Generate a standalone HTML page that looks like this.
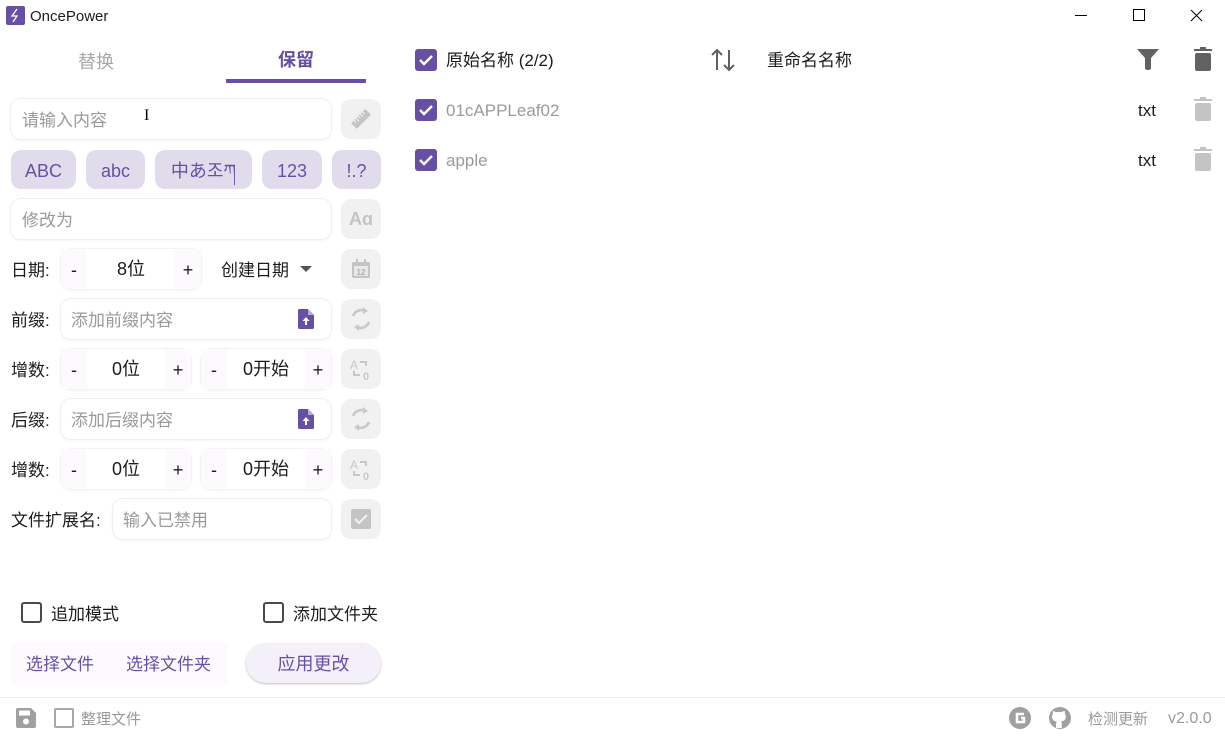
<!DOCTYPE html>
<html><head><meta charset="utf-8"><style>
*{box-sizing:border-box;margin:0;padding:0}
body{width:1225px;height:736px;background:#fff;font-family:"Liberation Sans","Noto Sans CJK SC",sans-serif;position:relative;overflow:hidden;color:#1c1b1f}
.a{position:absolute;line-height:1.15}
.inp{position:absolute;background:#fff;border-radius:10px;box-shadow:0 0 0 1px #f0eef2,0 1px 3px rgba(0,0,0,.08);font-size:17px;color:#9a9a9a;display:flex;align-items:center;padding-left:11px;padding-top:3px;line-height:1}
.btn{position:absolute;width:40px;height:40px;border-radius:10px;background:#f1f1f1;display:flex;align-items:center;justify-content:center}
.chip{position:absolute;top:150px;height:39px;border-radius:10px;background:#e1dcec;color:#6750a4;font-size:18px;display:flex;align-items:center;justify-content:center;line-height:1;padding-top:2px}
.lab{position:absolute;font-size:17px;color:#1c1b1f;height:40px;line-height:43px}
.step{position:absolute;height:40px;border-radius:10px;background:#fff;box-shadow:0 0 0 1px #f4f2f5,0 1px 3px rgba(0,0,0,.07);font-size:18px;display:flex;align-items:center}
.step span{display:block;text-align:center;line-height:42px}
.step .pm{width:26px;background:#fcfafc;height:100%}
.cb{position:absolute;width:22px;height:22px;border-radius:3px;background:#6750a4}
.row{position:absolute;font-size:17px;height:22px;line-height:24px}
</style></head><body>
<svg class="a" style="left:6px;top:6px" width="19" height="19"><rect x="0" y="0" width="19" height="19" rx="2" fill="#6750a4"/><path d="M11 3 L6 10 H11 L7 16" stroke="#fff" stroke-width="1.3" fill="none"/></svg>
<div class="a" style="left:30px;top:7px;font-size:15px;line-height:20px">OncePower</div>
<svg class="a" style="left:1075px;top:8px" width="140" height="16"><line x1="0" y1="7.5" x2="12" y2="7.5" stroke="#000"/><rect x="58.5" y="1.5" width="11" height="11" fill="none" stroke="#000"/><path d="M116 2 L127 13 M127 2 L116 13" stroke="#000"/></svg>
<div class="a" style="left:78px;top:50px;font-size:18px;color:#a8a8a8;line-height:24px">替换</div>
<div class="a" style="left:278px;top:48px;font-size:18px;color:#6750a4;font-weight:bold;line-height:24px">保留</div>
<div class="a" style="left:226px;top:79px;width:140px;height:4px;background:#6750a4"></div>
<div class="inp" style="left:11px;top:99px;width:320px;height:40px">请输入内容</div>
<div class="a" style="left:144px;top:107px;font-size:16px;color:#000;font-family:'Liberation Serif',serif">I</div>
<div class="btn" style="left:341px;top:99px"><svg width="22" height="22" viewBox="0 0 22 22"><g transform="rotate(-45 11 11)"><rect x="1" y="7" width="20" height="8" rx="1" fill="#c4c4c4"/><path d="M5 7v3M8 7v4M11 7v3M14 7v4M17 7v3" stroke="#f1f1f1" stroke-width="1.2"/></g></svg></div>
<div class="chip" style="left:11px;width:65px">ABC</div>
<div class="chip" style="left:86px;width:59px">abc</div>
<div class="chip" style="left:155px;width:97px">中あ조ཀ</div>
<div class="chip" style="left:262px;width:60px">123</div>
<div class="chip" style="left:332px;width:49px">!.?</div>
<div class="inp" style="left:11px;top:199px;width:320px;height:40px">修改为</div>
<div class="btn" style="left:341px;top:199px;color:#c4c4c4;font-size:18px;font-weight:bold">Aɑ</div>
<div class="lab" style="left:11px;top:249px">日期:</div>
<div class="step" style="left:61px;top:249px;width:140px"><span class="pm">-</span><span style="width:88px">8位</span><span class="pm">+</span></div>
<div class="lab" style="left:221px;top:249px">创建日期</div>
<svg class="a" style="left:300px;top:266px" width="12" height="7"><path d="M0 0h12L6 6z" fill="#555"/></svg>
<div class="btn" style="left:341px;top:249px"><svg width="20" height="20"><rect x="1" y="3" width="18" height="16" rx="1.5" fill="#c4c4c4"/><rect x="5" y="0" width="2" height="5" fill="#c4c4c4"/><rect x="13" y="0" width="2" height="5" fill="#c4c4c4"/><rect x="3" y="7" width="14" height="10" fill="#e8e8e8"/><text x="10" y="16" font-size="8" font-family="Liberation Sans" fill="#b0b0b0" text-anchor="middle" font-weight="bold">12</text></svg></div>
<div class="lab" style="left:11px;top:299px">前缀:</div>
<div class="inp" style="left:61px;top:299px;width:270px;height:40px;padding-left:10px">添加前缀内容</div>
<svg class="a" style="left:298px;top:309px" width="16" height="20"><path d="M0 1.5Q0 0 1.5 0H10L16 6V18.5Q16 20 14.5 20H1.5Q0 20 0 18.5Z" fill="#6750a4"/><path d="M10 0V6H16" fill="#b9a9dc"/><path d="M8 8L4.5 12H7V16H9V12H11.5Z" fill="#fff"/></svg>
<div class="btn" style="left:341px;top:299px"><svg width="26" height="26" viewBox="0 0 26 26"><path d="M5 10A9 9 0 0 1 16 4.5M21 16A9 9 0 0 1 10 21.5" stroke="#c8c8c8" stroke-width="2.6" fill="none"/><path d="M15 1l5 4-5 3zM11 25l-5-4 5-3z" fill="#c8c8c8"/></svg></div>
<div class="lab" style="left:11px;top:349px">增数:</div>
<div class="step" style="left:61px;top:349px;width:130px"><span class="pm">-</span><span style="width:78px">0位</span><span class="pm">+</span></div>
<div class="step" style="left:201px;top:349px;width:130px"><span class="pm">-</span><span style="width:78px">0开始</span><span class="pm">+</span></div>
<div class="btn" style="left:341px;top:349px"><svg width="24" height="24"><text x="1" y="12" font-size="12" font-family="Liberation Sans" fill="#c8c8c8">A</text><path d="M11 5h6v4M5 14v4h6" stroke="#c8c8c8" stroke-width="2" fill="none"/><text x="14" y="23" font-size="11" font-family="Liberation Sans" font-weight="bold" fill="#c8c8c8">0</text></svg></div>
<div class="lab" style="left:11px;top:399px">后缀:</div>
<div class="inp" style="left:61px;top:399px;width:270px;height:40px;padding-left:10px">添加后缀内容</div>
<svg class="a" style="left:298px;top:409px" width="16" height="20"><path d="M0 1.5Q0 0 1.5 0H10L16 6V18.5Q16 20 14.5 20H1.5Q0 20 0 18.5Z" fill="#6750a4"/><path d="M10 0V6H16" fill="#b9a9dc"/><path d="M8 8L4.5 12H7V16H9V12H11.5Z" fill="#fff"/></svg>
<div class="btn" style="left:341px;top:399px"><svg width="26" height="26" viewBox="0 0 26 26"><path d="M5 10A9 9 0 0 1 16 4.5M21 16A9 9 0 0 1 10 21.5" stroke="#c8c8c8" stroke-width="2.6" fill="none"/><path d="M15 1l5 4-5 3zM11 25l-5-4 5-3z" fill="#c8c8c8"/></svg></div>
<div class="lab" style="left:11px;top:449px">增数:</div>
<div class="step" style="left:61px;top:449px;width:130px"><span class="pm">-</span><span style="width:78px">0位</span><span class="pm">+</span></div>
<div class="step" style="left:201px;top:449px;width:130px"><span class="pm">-</span><span style="width:78px">0开始</span><span class="pm">+</span></div>
<div class="btn" style="left:341px;top:449px"><svg width="24" height="24"><text x="1" y="12" font-size="12" font-family="Liberation Sans" fill="#c8c8c8">A</text><path d="M11 5h6v4M5 14v4h6" stroke="#c8c8c8" stroke-width="2" fill="none"/><text x="14" y="23" font-size="11" font-family="Liberation Sans" font-weight="bold" fill="#c8c8c8">0</text></svg></div>
<div class="lab" style="left:11px;top:499px">文件扩展名:</div>
<div class="inp" style="left:113px;top:499px;width:218px;height:40px;padding-left:10px">输入已禁用</div>
<div class="btn" style="left:341px;top:499px"><svg width="20" height="20"><rect width="20" height="20" rx="2" fill="#c4c4c4"/><path d="M4 10l4 4 8-8" stroke="#f1f1f1" stroke-width="2.2" fill="none"/></svg></div>
<div class="a" style="left:21px;top:602px;width:21px;height:21px;border:2.5px solid #4a4a4a;border-radius:3px"></div>
<div class="lab" style="left:51px;top:593px">追加模式</div>
<div class="a" style="left:263px;top:602px;width:21px;height:21px;border:2.5px solid #4a4a4a;border-radius:3px"></div>
<div class="lab" style="left:293px;top:593px">添加文件夹</div>
<div class="a" style="left:11px;top:643px;width:216px;height:40px;background:#fcfafd"></div>
<div class="lab" style="left:26px;top:643px;color:#6750a4">选择文件</div>
<div class="lab" style="left:126px;top:643px;color:#6750a4">选择文件夹</div>
<div class="a" style="left:246px;top:643px;width:135px;height:40px;border-radius:20px;background:#f4f0f9;box-shadow:0 1px 2px rgba(0,0,0,.25);color:#6750a4;font-size:18px;display:flex;align-items:center;justify-content:center;line-height:1;padding-top:2px">应用更改</div>
<div class="a" style="left:0;top:697px;width:1225px;height:1px;background:#ececec"></div>
<svg class="a" style="left:16px;top:708px" width="20" height="20"><path d="M0 2Q0 0 2 0H15L20 5V18Q20 20 18 20H2Q0 20 0 18Z" fill="#a0a0a0"/><rect x="3" y="2.5" width="11" height="5" fill="#fff"/><circle cx="10" cy="13.5" r="3" fill="#fff"/></svg>
<div class="a" style="left:54px;top:708px;width:20px;height:20px;border:2px solid #a8a8a8;border-radius:2px"></div>
<div class="a" style="left:81px;top:710px;font-size:15px;color:#999;line-height:20px">整理文件</div>
<svg class="a" style="left:1009px;top:707px" width="64" height="22"><circle cx="11" cy="11" r="11" fill="#a0a0a0"/><path d="M15 7H8v8h7v-4h-3" stroke="#fff" stroke-width="2.6" fill="none"/><circle cx="51" cy="11" r="11" fill="#a0a0a0"/><path d="M47 21v-4c0-1 .5-2 1-2.5-3-.3-5-1.6-5-5 0-1 .4-2 1-2.6-.1-.5-.3-1.5.1-2.9 0 0 1 0 2.8 1.2a9 9 0 0 1 5 0C54.7 4 55.7 4 55.7 4c.4 1.4.2 2.4.1 2.9.6.6 1 1.6 1 2.6 0 3.4-2 4.7-5 5 .5.5 1 1.4 1 2.5v4z" fill="#fff"/></svg>
<div class="a" style="left:1088px;top:710px;font-size:15px;color:#999;line-height:20px">检测更新</div>
<div class="a" style="left:1168px;top:709px;font-size:16px;color:#999;line-height:20px">v2.0.0</div>
<div class="cb" style="left:415px;top:49px"></div>
<svg class="a" style="left:415px;top:49px" width="22" height="22"><path d="M5 11l4 4 8-8" stroke="#fff" stroke-width="2.4" fill="none"/></svg>
<div class="row" style="left:446px;top:49px">原始名称 (2/2)</div>
<svg class="a" style="left:710px;top:47px" width="26" height="26"><path d="M7 23V3M2 8l5-5 5 5M19 3v20M14 18l5 5 5-5" stroke="#606060" stroke-width="2" fill="none"/></svg>
<div class="row" style="left:767px;top:49px">重命名名称</div>
<svg class="a" style="left:1137px;top:49px" width="22" height="21"><path d="M0 0H22L14 9V19Q14 21 11 21Q8 21 8 19V9Z" fill="#626262"/></svg>
<svg class="a" style="left:1194px;top:47px" width="18" height="24"><rect x="0" y="2" width="18" height="2" fill="#626262"/><rect x="6" y="0" width="6" height="3" fill="#626262"/><rect x="1" y="6" width="16" height="18" rx="2" fill="#626262"/></svg>
<div class="cb" style="left:415px;top:99px"></div>
<svg class="a" style="left:415px;top:99px" width="22" height="22"><path d="M5 11l4 4 8-8" stroke="#fff" stroke-width="2.4" fill="none"/></svg>
<div class="row" style="left:446px;top:99px;color:#9a9a9a">01cAPPLeaf02</div>
<div class="row" style="left:1138px;top:99px">txt</div>
<svg class="a" style="left:1194px;top:97px" width="18" height="24"><rect x="0" y="2" width="18" height="2" fill="#c4c4c4"/><rect x="6" y="0" width="6" height="3" fill="#c4c4c4"/><rect x="1" y="6" width="16" height="18" rx="2" fill="#c4c4c4"/></svg>
<div class="cb" style="left:415px;top:149px"></div>
<svg class="a" style="left:415px;top:149px" width="22" height="22"><path d="M5 11l4 4 8-8" stroke="#fff" stroke-width="2.4" fill="none"/></svg>
<div class="row" style="left:446px;top:149px;color:#9a9a9a">apple</div>
<div class="row" style="left:1138px;top:149px">txt</div>
<svg class="a" style="left:1194px;top:147px" width="18" height="24"><rect x="0" y="2" width="18" height="2" fill="#c4c4c4"/><rect x="6" y="0" width="6" height="3" fill="#c4c4c4"/><rect x="1" y="6" width="16" height="18" rx="2" fill="#c4c4c4"/></svg>
</body></html>
